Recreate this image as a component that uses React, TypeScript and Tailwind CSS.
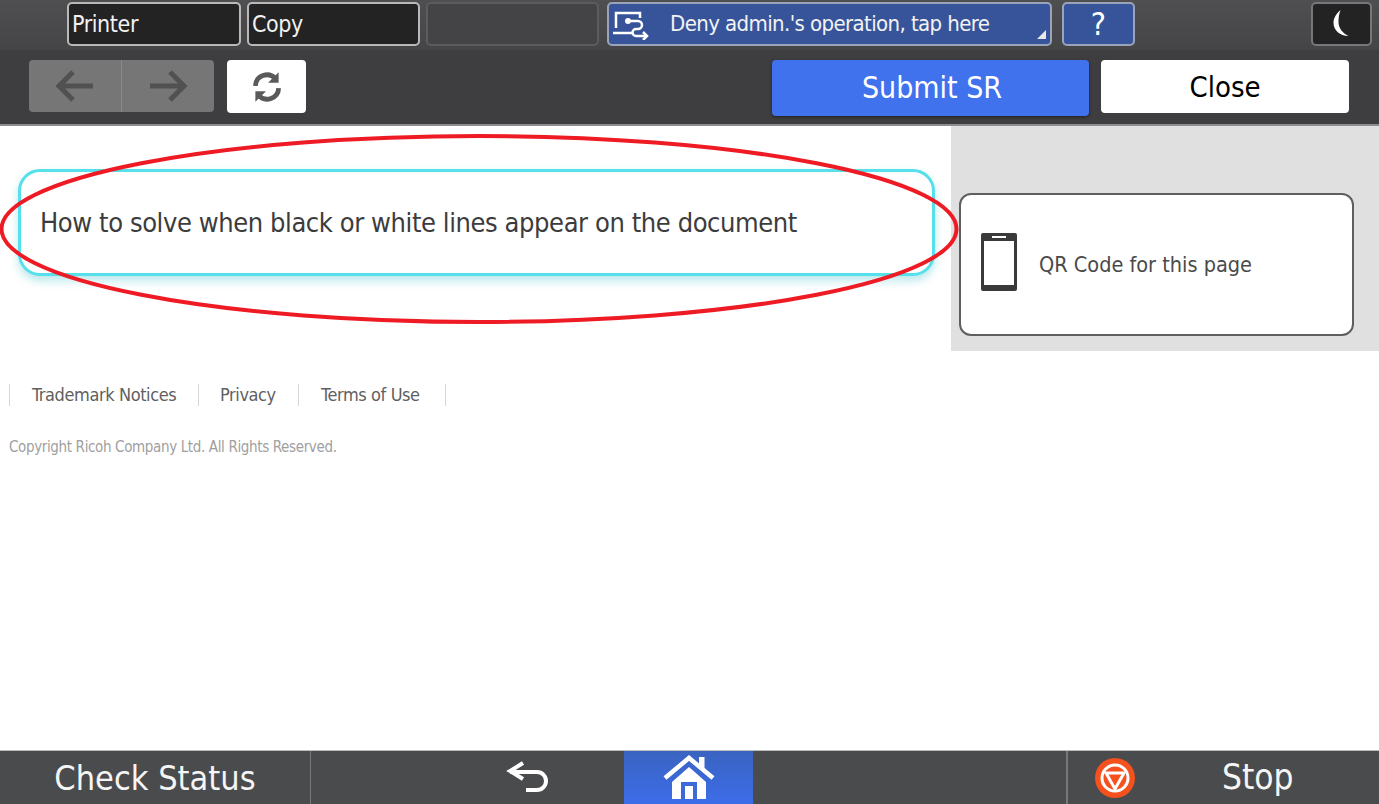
const font = { fontFamily: '"DejaVu Sans Condensed", "DejaVu Sans", sans-serif' };

function SlotButton({ label, active, wide }: { label?: string; active?: boolean; wide?: boolean }) {
  return (
    <div
      className={`flex h-[44px] items-center rounded-[5px] border-2 pl-[3px] text-[23px] leading-none tracking-[-0.4px] text-[#f2f2f2] ${
        wide ? "w-[174px]" : "w-[173px]"
      } ${active ? "border-[#b9b9b9] bg-[#232323]" : "border-[#5c5c5e] bg-[#444446]"}`}
    >
      {label}
    </div>
  );
}

function TopBar() {
  return (
    <div className="flex h-[50px] items-start bg-gradient-to-b from-[#4f4f51] to-[#454547] pl-[67px] pt-[2px]">
      <div className="flex gap-[6px]">
        <SlotButton label="Printer" active wide />
        <SlotButton label="Copy" active />
        <SlotButton />
      </div>
      <div className="relative ml-[8px] flex h-[44px] w-[445px] items-center rounded-[5px] border-2 border-[#9aa3b8] bg-[#37549a] text-[#f2f2f2]">
        {/* admin operation icon */}
        <svg width="38" height="32" viewBox="0 0 38 32" className="ml-[3px]" fill="none" stroke="#fff" strokeWidth="2.500">
          <path d="M4 20V5h24v5" />
          <path d="M1 25h19" />
          <circle cx="16" cy="13" r="3" fill="#fff" stroke="none" />
          <path d="M18 13h8a4 4 0 0 1 0 8h-2a3.500 3.500 0 0 0 0 7h11" />
          <path d="M31 24l4 4-4 4" />
        </svg>
        <span className="ml-[20px] whitespace-nowrap text-[22px] leading-none tracking-[-0.6px]">
          Deny admin.'s operation, tap here
        </span>
        <span className="absolute bottom-[5px] right-[4px] h-0 w-0 border-b-[9px] border-l-[9px] border-b-[#e8e8e8] border-l-transparent" />
      </div>
      <div className="ml-[10px] flex h-[44px] w-[73px] items-center justify-center rounded-[5px] border-2 border-[#9aa3b8] bg-[#37549a] text-[32px] leading-none text-white">
        ?
      </div>
      <div className="ml-[176px] flex h-[44px] w-[61px] items-center justify-center rounded-[5px] border-2 border-[#77777a] bg-[#232323]">
        <svg width="20" height="32" viewBox="0 0 20 32">
          <path d="M8.500 2C3 7 1.500 11 1.500 15c0 7 6.500 13 15 13-6-3-10-8-10-14 0-4 .5-8 2-12z" fill="#fff" />
        </svg>
      </div>
    </div>
  );
}

function ActionBar() {
  return (
    <div className="flex h-[76px] items-start border-b-2 border-b-[#8d8d8d] bg-[#3e3e40] pl-[29px] pt-[10px]">
      <div className="flex h-[52px] w-[185px] rounded-[4px] bg-[#767676]">
        <div className="flex w-[93px] items-center justify-center border-r border-r-[#8a8a8a]">
          <svg width="40" height="34" viewBox="0 0 40 34" fill="none" stroke="#515151" strokeWidth="5">
            <path d="M38 17H5M18 3L4 17l14 14" />
          </svg>
        </div>
        <div className="flex flex-1 items-center justify-center">
          <svg width="40" height="34" viewBox="0 0 40 34" fill="none" stroke="#515151" strokeWidth="5">
            <path d="M2 17h33M22 3l14 14-14 14" />
          </svg>
        </div>
      </div>
      <div className="ml-[13px] flex h-[53px] w-[79px] items-center justify-center rounded-[4px] bg-white">
        <svg width="32" height="36" viewBox="0 0 30 34" fill="none" stroke="#5a5a5a" strokeWidth="4.500">
          <path d="M4 16a11 11 0 0 1 19-7" />
          <path d="M26 18a11 11 0 0 1-19 7" />
          <path d="M26 3v10H16z" fill="#5a5a5a" stroke="none" />
          <path d="M4 31V21h10z" fill="#5a5a5a" stroke="none" />
        </svg>
      </div>
      <div className="ml-[466px] flex h-[56px] w-[317px] items-center justify-center rounded-[4px] bg-[#4072ee] pl-[3px] text-[30px] leading-none text-white shadow-[0_1px_3px_rgba(0,0,0,0.5)]">
        Submit SR
      </div>
      <div className="ml-[12px] flex h-[53px] w-[248px] items-center justify-center rounded-[4px] bg-white pt-[2px] text-[29px] leading-none text-black">
        Close
      </div>
    </div>
  );
}

function Divider() {
  return <span className="h-[22px] w-px bg-[#d6d6d6]" />;
}

function Content() {
  return (
    <div className="relative flex flex-1 bg-white">
      <div className="w-[951px] pl-[9px]">
        <div className="ml-[9px] mt-[43px] flex h-[107px] w-[917px] items-start rounded-[22px] border-[3px] border-[#55e0ec] bg-white pl-[19px] pt-[37px] text-[27px] leading-none tracking-[-0.41px] text-[#3c3c3c] shadow-[0_5px_8px_rgba(60,190,200,0.35)]">
          How to solve when black or white lines appear on the document
        </div>
        <div className="mt-[108px] flex items-center text-[18px] leading-none tracking-[-0.4px] text-[#5f5f5f]">
          <Divider />
          <span className="w-[188px] pl-[22px]">Trademark Notices</span>
          <Divider />
          <span className="w-[99px] pl-[21px]">Privacy</span>
          <Divider />
          <span className="w-[146px] pl-[22px]">Terms of Use</span>
          <Divider />
        </div>
        <div className="mt-[34px] text-[15px] leading-none tracking-[-0.36px] text-[#a0a0a0]">
          Copyright Ricoh Company Ltd. All Rights Reserved.
        </div>
      </div>
      <div className="h-[225px] w-[428px] bg-[#e0e0e0] pl-[8px] pt-[67px]">
        <div className="flex h-[143px] w-[395px] items-center rounded-[12px] border-2 border-[#5f5f5f] bg-white pl-[20px]">
          <svg width="36" height="58" viewBox="0 0 36 58" className="mt-[-6px]">
            <rect width="36" height="58" rx="2" fill="#3a3a3a" />
            <rect x="3" y="8" width="30" height="44" fill="#fff" />
            <rect x="11" y="3" width="14" height="2" fill="#fff" />
          </svg>
          <span className="ml-[22px] text-[21.500px] leading-none text-[#4a4a4a]">QR Code for this page</span>
        </div>
      </div>
      {/* red annotation drawn over the page */}
      <svg className="pointer-events-none absolute left-0 top-0" width="962" height="204" viewBox="0 0 962 204" fill="none">
        <ellipse cx="479" cy="103" rx="477.500" ry="93" stroke="#ee1b25" strokeWidth="4" />
      </svg>
    </div>
  );
}

function BottomBar() {
  return (
    <div className="flex h-[54px] border-t border-t-[#bdbdbd] bg-[#4a4b4d] text-[#f5f5f5]">
      <div className="flex w-[311px] items-center justify-center border-r border-r-[#77787a] text-[34px] leading-none">
        Check Status
      </div>
      <div className="flex w-[313px] items-center justify-end pr-[74px]">
        <svg width="44" height="36" viewBox="0 0 44 36" fill="none" stroke="#fff" strokeWidth="4">
          <path d="M17 3L4 11l13 8" />
          <path d="M4 12h27a9 9 0 0 1 0 18H20" />
        </svg>
      </div>
      <div className="flex w-[129px] items-center justify-center bg-gradient-to-b from-[#3a63c0] to-[#3d6dea]">
        <svg width="54" height="46" viewBox="0 0 54 46" fill="#fff">
          <path d="M3 23L27 3l24 20" fill="none" stroke="#fff" strokeWidth="4.500" />
          <rect x="37" y="2" width="5.500" height="12" />
          <path d="M10 27l17-15 17 15v17H10z" />
          <rect x="19" y="27" width="16" height="17" fill="#3c69dc" />
          <rect x="23" y="31" width="8" height="13" />
        </svg>
      </div>
      <div className="w-[313px]" />
      <div className="flex flex-1 items-center border-l-2 border-l-[#77787a]">
        <svg width="40" height="40" viewBox="0 0 40 40" className="ml-[27px]">
          <circle cx="20" cy="20" r="20" fill="#f4511e" />
          <circle cx="20" cy="20" r="13" fill="none" stroke="#fff" strokeWidth="3" />
          <path d="M11 15h18l-9 16z" fill="none" stroke="#fff" strokeWidth="3" />
        </svg>
        <span className="ml-[87px] text-[35px] leading-none">Stop</span>
      </div>
    </div>
  );
}

export default function App() {
  return (
    <div className="flex h-[804px] w-[1379px] flex-col overflow-hidden" style={font}>
      <TopBar />
      <ActionBar />
      <Content />
      <BottomBar />
    </div>
  );
}
